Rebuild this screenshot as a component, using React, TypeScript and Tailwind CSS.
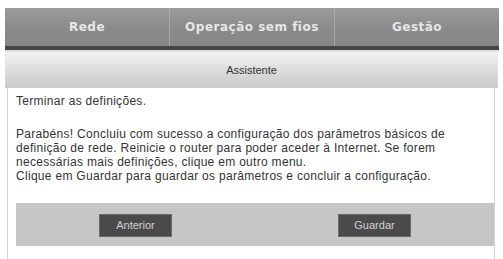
export default function App() {
  const body = "font-['Liberation_Sans',Arial,sans-serif]";
  return (
    <div className="w-[503px] h-[259px] bg-white overflow-hidden">
      <div className="pt-[8px] pl-[5px] w-[499px]">
        <div className="flex h-[38px] bg-gradient-to-b from-[#9c9c9c] via-[#8b8b8b] to-[#868686] font-['DejaVu_Sans',Verdana,sans-serif] font-bold text-[12px] tracking-[0.5px] text-[#e6e6e6]">
          <div className="flex-1 flex items-center justify-center border-r border-[#a8a8a8]">Rede</div>
          <div className="flex-1 flex items-center justify-center border-r border-[#a8a8a8]">Operação sem fios</div>
          <div className="flex-1 flex items-center justify-center">Gestão</div>
        </div>
        <div className="h-[4px] bg-[#464646]" />
        <div className="h-[2px] bg-[#dedede]" />
        <div className={`h-[36px] w-[493px] flex items-center justify-center bg-gradient-to-b from-[#f2f2f2] to-[#c9c9c9] text-[11px] text-[#333] ${body}`}>
          Assistente
        </div>
        <div className={`ml-[2px] w-[488px] border-l border-r border-[#d4d4d4] h-[200px] pt-[6px] pl-[8px] text-[12px] leading-[14px] text-[#333] ${body}`}>
          <div className="tracking-[0.3px]">
            <p>Terminar as definições.</p>
            <p className="mt-[19px]">
              Parabéns! Concluiu com sucesso a configuração dos parâmetros básicos de
              <br />
              definição de rede. Reinicie o router para poder aceder à Internet. Se forem
              <br />
              necessárias mais definições, clique em outro menu.
              <br />
              Clique em Guardar para guardar os parâmetros e concluir a configuração.
            </p>
          </div>
          <div className="mt-[20px] w-[478px] h-[43px] bg-[#c6c6c6] grid grid-cols-2 items-center pt-[1px]">
            <div className="flex justify-center">
              <div className="w-[73px] h-[23px] bg-[#4a4a4a] border border-[#6a6a6a] flex items-center justify-center text-[11px] text-[#d2d2d2]">Anterior</div>
            </div>
            <div className="flex justify-center">
              <div className="w-[73px] h-[23px] bg-[#4a4a4a] border border-[#6a6a6a] flex items-center justify-center text-[11px] text-[#d2d2d2]">Guardar</div>
            </div>
          </div>
        </div>
      </div>
    </div>
  );
}
